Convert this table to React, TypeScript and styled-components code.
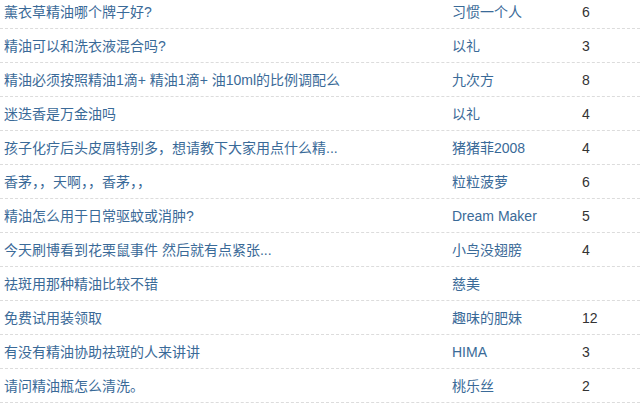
import React from "react";
import styled, { createGlobalStyle } from "styled-components";

const Global = createGlobalStyle`
  html, body { margin: 0; padding: 0; background: #fff; }
  body {
    font-family: "Liberation Sans", "Noto Sans CJK SC", sans-serif;
    font-size: 14px;
    overflow: hidden;
  }
`;

const List = styled.div`
  width: 640px;
  margin-top: -5px;
  display: flex;
  flex-direction: column;
`;

const Row = styled.div`
  display: grid;
  grid-template-columns: 448px 130px 1fr;
  height: 34px;
  align-items: center;
  border-bottom: 1px dashed #dcdcdc;
  box-sizing: border-box;
  padding-left: 4px;
`;

const Title = styled.a`
  color: #3a6a98;
  text-decoration: none;
  white-space: nowrap;
  overflow: hidden;
  line-height: 20px;
`;

const Author = styled.a`
  color: #3a6a98;
  text-decoration: none;
  white-space: nowrap;
  line-height: 20px;
`;

const Count = styled.span`
  color: #333;
  line-height: 20px;
`;

const rows: [string, string, string][] = [
  ["薰衣草精油哪个牌子好?", "习惯一个人", "6"],
  ["精油可以和洗衣液混合吗?", "以礼", "3"],
  ["精油必须按照精油1滴+ 精油1滴+ 油10ml的比例调配么", "九次方", "8"],
  ["迷迭香是万金油吗", "以礼", "4"],
  ["孩子化疗后头皮屑特别多，想请教下大家用点什么精...", "猪猪菲2008", "4"],
  ["香茅，，天啊，，香茅，，", "粒粒菠萝", "6"],
  ["精油怎么用于日常驱蚊或消肿?", "Dream Maker", "5"],
  ["今天刷博看到花栗鼠事件 然后就有点紧张...", "小鸟没翅膀", "4"],
  ["祛斑用那种精油比较不错", "慈美", ""],
  ["免费试用装领取", "趣味的肥妹", "12"],
  ["有没有精油协助祛斑的人来讲讲", "HIMA", "3"],
  ["请问精油瓶怎么清洗。", "桃乐丝", "2"],
];

export default function App() {
  return (
    <>
      <Global />
      <List>
        {rows.map(([t, a, c], i) => (
          <Row key={i}>
            <Title href="#">{t}</Title>
            <Author href="#">{a}</Author>
            <Count>{c}</Count>
          </Row>
        ))}
      </List>
    </>
  );
}
